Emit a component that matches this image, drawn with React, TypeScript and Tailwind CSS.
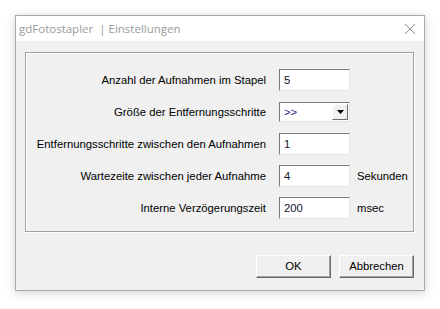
const rows = [
  { label: "Anzahl der Aufnahmen im Stapel", value: "5", unit: "" },
  { label: "Größe der Entfernungsschritte", value: ">>", unit: "", combo: true },
  { label: "Entfernungsschritte zwischen den Aufnahmen", value: "1", unit: "" },
  { label: "Wartezeite zwischen jeder Aufnahme", value: "4", unit: "Sekunden" },
  { label: "Interne Verzögerungszeit", value: "200", unit: "msec" },
];

const sunken =
  "border border-t-[#7a7a7a] border-l-[#7a7a7a] border-b-[#e3e3e3] border-r-[#e3e3e3] bg-white";

const App = () => {
  return (
    <div className="w-[440px] h-[309px] bg-white pl-[15px] pt-[15px] font-['Liberation_Sans',Arial,sans-serif] text-[11.3px] text-black">
      <div className="w-[410px] h-[276px] border border-[#a9a9a9] bg-[#f0f0f0] shadow-[0_2px_10px_rgba(0,0,0,0.18)] flex flex-col">
        {/* title bar */}
        <div className="h-[25px] bg-white flex items-center justify-between pl-[3px] pr-[8px]">
          <span className="font-['Open_Sans',sans-serif] text-[11.5px] text-[#9a9a9a] whitespace-pre">
            gdFotostapler  | Einstellungen
          </span>
          <svg width="12" height="12" viewBox="0 0 12 12" className="text-[#8a8a8a]">
            <path d="M1 1 L11 11 M11 1 L1 11" stroke="currentColor" strokeWidth="1" />
          </svg>
        </div>

        <div className="flex-1 px-[9px] pt-[11px]">
          {/* group box */}
          <div className="w-[389px] border border-[#a0a0a0] shadow-[inset_1px_1px_0_#fff,1px_1px_0_#fff] pt-[16px] pb-[12px] flex flex-col gap-[10px]">
            {rows.map((r) => (
              <div key={r.label} className="flex items-center h-[22px]">
                <div className="w-[253px] text-right pr-[13px] whitespace-nowrap">{r.label}</div>
                {r.combo ? (
                  <div className={`w-[71px] h-[20px] ${sunken} flex items-center justify-between pl-[4px] pr-[1px]`}>
                    <span className="text-[#1a1a8a]">{r.value}</span>
                    <div className="w-[16px] h-[16px] bg-[#f0f0f0] border border-t-white border-l-white border-b-[#6a6a6a] border-r-[#6a6a6a] flex items-center justify-center">
                      <svg width="7" height="4" viewBox="0 0 7 4">
                        <path d="M0 0 H7 L3.5 4 Z" fill="#000" />
                      </svg>
                    </div>
                  </div>
                ) : (
                  <div className={`w-[71px] h-[22px] ${sunken} flex items-center pl-[4px]`}>
                    <span className="text-[#141428]">{r.value}</span>
                  </div>
                )}
                {r.unit && <div className="pl-[7px]">{r.unit}</div>}
              </div>
            ))}
          </div>

          <div className="w-[389px] flex justify-end gap-[8px] mt-[23px]">
            <button className="w-[75px] h-[23px] bg-[#f0f0f0] border border-t-white border-l-white border-b-[#696969] border-r-[#696969] shadow-[inset_-1px_-1px_0_#a0a0a0]">
              OK
            </button>
            <button className="w-[75px] h-[23px] bg-[#f0f0f0] border border-t-white border-l-white border-b-[#696969] border-r-[#696969] shadow-[inset_-1px_-1px_0_#a0a0a0]">
              Abbrechen
            </button>
          </div>
        </div>
      </div>
    </div>
  );
};

export default App;
